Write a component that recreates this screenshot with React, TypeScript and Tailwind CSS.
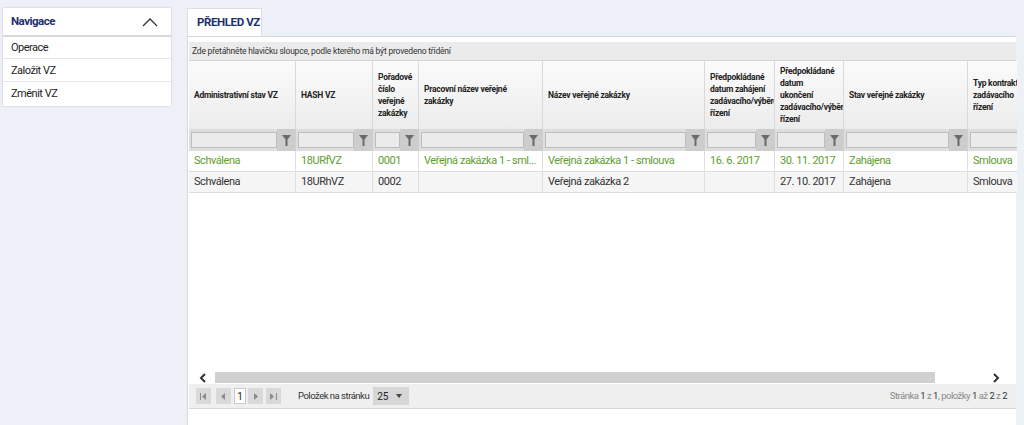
import React from "react";

const cols = [
  { w: 107, lines: ["Administrativní stav VZ"], fw: 86 },
  { w: 77, lines: ["HASH VZ"], fw: 56 },
  { w: 46, lines: ["Pořadové", "číslo", "veřejné", "zakázky"], fw: 25 },
  { w: 124, lines: ["Pracovní název veřejné", "zakázky"], fw: 103 },
  { w: 162, lines: ["Název veřejné zakázky"], fw: 141 },
  { w: 70, lines: ["Předpokládané", "datum zahájení", "zadávacího/výběrového", "řízení"], fw: 49 },
  { w: 69, lines: ["Předpokládané", "datum", "ukončení", "zadávacího/výběrového", "řízení"], fw: 48 },
  { w: 124, lines: ["Stav veřejné zakázky"], fw: 103 },
  { w: 90, lines: ["Typ kontraktu", "zadávacího", "řízení"], fw: 69 },
];

const rows = [
  { green: true, cells: ["Schválena", "18URfVZ", "0001", "Veřejná zakázka 1 - sml...", "Veřejná zakázka 1 - smlouva", "16. 6. 2017", "30. 11. 2017", "Zahájena", "Smlouva"] },
  { green: false, cells: ["Schválena", "18URhVZ", "0002", "", "Veřejná zakázka 2", "", "27. 10. 2017", "Zahájena", "Smlouva"] },
];

const Funnel = () => (
  <svg width="9" height="11" viewBox="0 0 9 11">
    <polygon points="0,0 9,0 5.5,4.5 5.5,11 3.5,11 3.5,4.5" fill="#6b6b6b" />
  </svg>
);

const ChevUp = () => (
  <svg width="16" height="10" viewBox="0 0 16 10">
    <polyline points="1,9 8,2 15,9" fill="none" stroke="#333" strokeWidth="1.3" />
  </svg>
);

const PagerBtn = ({ children }: { children: React.ReactNode }) => (
  <div className="flex h-[16px] w-[15px] items-center justify-center bg-[#d9d9d9] text-[#8a8a8a]">{children}</div>
);

export default function App() {
  return (
    <div
      className="flex h-[425px] w-[1024px] overflow-hidden bg-[#eef0f8] text-[#222]"
      style={{ fontFamily: "Roboto, 'Liberation Sans', sans-serif" }}
    >
      {/* Sidebar */}
      <div className="ml-[3px] mt-[8px] h-[98px] w-[168px] bg-white shadow-[0_0_2px_rgba(0,0,0,0.2)]">
        <div className="flex h-[29px] items-center justify-between border-b-2 border-[#d8d8d8] pl-[8px] pr-[13px]">
          <span className="text-[11.5px] font-bold tracking-[-0.5px] text-[#1d2f6f]">Navigace</span>
          <ChevUp />
        </div>
        <div className="flex h-[22px] items-center border-b border-[#e6e6e6] pl-[8px] pt-[2px] text-[11px] tracking-[-0.5px]">Operace</div>
        <div className="flex h-[23px] items-center border-b border-[#e6e6e6] pl-[8px] pt-[2px] text-[11px] tracking-[-0.5px]">Založit VZ</div>
        <div className="flex h-[22px] items-center pl-[8px] pt-[2px] text-[11px] tracking-[-0.5px]">Změnit VZ</div>
      </div>

      {/* Main */}
      <div className="ml-[16px] mt-[8px] flex w-[829px] flex-col">
        <div className="flex">
          <div className="flex h-[28px] w-[75px] items-center border border-b-0 border-[#dcdee6] bg-white pl-[9px] text-[11.5px] font-bold tracking-[-0.4px] text-[#1d2f6f]">
            PŘEHLED VZ
          </div>
        </div>
        <div className="flex flex-1 flex-col border-l border-t border-[#d6d8e0] bg-white pl-[1px] pt-[5px]">
          {/* group bar */}
          <div className="flex h-[19px] items-center border-b border-[#d4d4d4] bg-[#ebebeb] pl-[3px] text-[8.5px] tracking-[-0.2px] text-[#333]">
            Zde přetáhněte hlavičku sloupce, podle kterého má být provedeno třídění
          </div>
          <div className="w-[828px] overflow-hidden">
            <div className="flex w-max flex-col">
              {/* header */}
              <div className="flex h-[68px] bg-gradient-to-b from-[#fbfbfb] to-[#ececec]">
                {cols.map((c, i) => (
                  <div
                    key={i}
                    style={{ width: c.w }}
                    className="flex shrink-0 flex-col justify-center overflow-hidden border-r border-[#d9d9d9] pl-[5px] text-[8.5px] font-bold leading-[12px] tracking-[-0.25px] text-[#222]"
                  >
                    {c.lines.map((l, li) => (
                      <div key={li} className="whitespace-nowrap">{l}</div>
                    ))}
                  </div>
                ))}
              </div>
              {/* filter */}
              <div className="flex h-[22px] bg-[#dedede]">
                {cols.map((c, i) => (
                  <div key={i} style={{ width: c.w }} className="flex shrink-0 items-center border-r border-[#cfcfcf] pl-[2px]">
                    <div style={{ width: c.fw }} className="h-[16px] shrink-0 border border-[#bdbdbd] bg-[#ebebeb]" />
                    <div className="flex h-[22px] flex-1 items-center justify-center bg-[#cdcdcd]">
                      <Funnel />
                    </div>
                  </div>
                ))}
              </div>
              {/* rows */}
              {rows.map((r, ri) => (
                <div
                  key={ri}
                  className={`flex h-[21px] border-b border-[#dedede] ${r.green ? "bg-white text-[#5e9e2c]" : "bg-[#f5f5f5] text-[#333]"}`}
                >
                  {r.cells.map((t, ci) => (
                    <div
                      key={ci}
                      style={{ width: cols[ci].w }}
                      className="flex shrink-0 items-center overflow-hidden whitespace-nowrap border-r border-[#dedede] px-[5px] text-[11px] tracking-[-0.45px]"
                    >
                      {t}
                    </div>
                  ))}
                </div>
              ))}
            </div>
          </div>
          <div className="flex-1" />
          {/* scrollbar */}
          <div className="flex h-[13px] items-center bg-white">
            <div className="flex w-[26px] items-center justify-center">
              <svg width="7" height="10" viewBox="0 0 7 10">
                <polyline points="6,1 2,5 6,9" fill="none" stroke="#333" strokeWidth="2" />
              </svg>
            </div>
            <div className="h-[11px] w-[720px] bg-[#d0d0d0]" />
            <div className="flex-1" />
            <div className="mr-[15px] flex w-[10px] items-center justify-center">
              <svg width="7" height="10" viewBox="0 0 7 10">
                <polyline points="1,1 5,5 1,9" fill="none" stroke="#333" strokeWidth="2" />
              </svg>
            </div>
          </div>
          {/* pager */}
          <div className="flex h-[25px] items-center border-b border-[#d8d8d8] bg-[#efefef] pl-[7px] pr-[9px] text-[9.5px] tracking-[-0.5px] text-[#333]">
            <PagerBtn>
              <svg width="7" height="7" viewBox="0 0 7 7"><rect x="0" y="0" width="1" height="7" fill="#8a8a8a" /><polygon points="6,0 2,3.5 6,7" fill="#8a8a8a" /></svg>
            </PagerBtn>
            <div className="w-[5px]" />
            <PagerBtn>
              <svg width="5" height="7" viewBox="0 0 5 7"><polygon points="4,0 0,3.5 4,7" fill="#8a8a8a" /></svg>
            </PagerBtn>
            <div className="ml-[3px] flex h-[16px] w-[12px] items-center justify-center border border-[#c8c8c8] bg-white text-[10px] tracking-normal text-[#222]">1</div>
            <div className="w-[2px]" />
            <PagerBtn>
              <svg width="5" height="7" viewBox="0 0 5 7"><polygon points="1,0 5,3.5 1,7" fill="#8a8a8a" /></svg>
            </PagerBtn>
            <div className="w-[3px]" />
            <PagerBtn>
              <svg width="7" height="7" viewBox="0 0 7 7"><polygon points="0,0 4,3.5 0,7" fill="#8a8a8a" /><rect x="6" y="0" width="1" height="7" fill="#8a8a8a" /></svg>
            </PagerBtn>
            <span className="ml-[17px]">Položek na stránku</span>
            <div className="ml-[4px] flex h-[18px] w-[36px] items-center justify-between bg-[#d6d6d6] pl-[4px] pr-[7px] text-[10px] tracking-normal text-[#222]">
              <span>25</span>
              <svg width="6" height="4" viewBox="0 0 6 4"><polygon points="0,0 6,0 3,4" fill="#444" /></svg>
            </div>
            <div className="flex-1" />
            <span className="text-[#888]">
              Stránka <span className="text-[#333]">1</span> z <span className="text-[#333]">1</span>, položky <span className="text-[#333]">1</span> až <span className="text-[#333]">2</span> z <span className="text-[#333]">2</span>
            </span>
          </div>
          <div className="h-[16px] bg-white" />
        </div>
      </div>
    </div>
  );
}
